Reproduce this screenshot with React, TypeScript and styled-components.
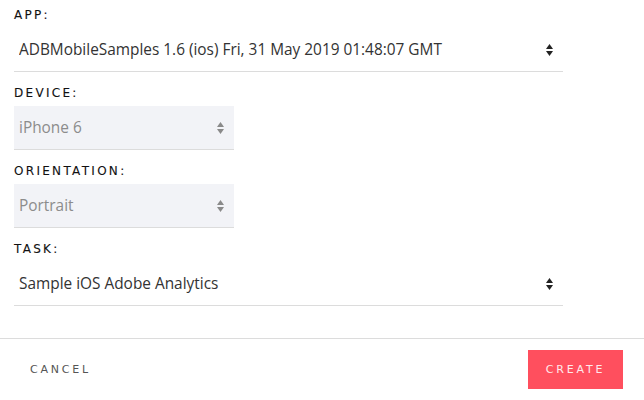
import React from "react";
import styled, { createGlobalStyle } from "styled-components";

const GlobalStyle = createGlobalStyle`
  html, body {
    margin: 0;
    padding: 0;
    background: #fff;
  }
  body {
    font-family: "Open Sans", "Noto Sans", sans-serif;
    color: #333;
  }
`;

interface IFieldProps {
  label: string;
  value: string;
  wide?: boolean;
  disabled?: boolean;
}

const Arrows: React.FC<{ muted?: boolean }> = ({ muted }) => (
  <ArrowIcon width="7" height="12" viewBox="0 0 7 12" $muted={muted}>
    <path d="M3.5 0 L7 5 L0 5 Z" />
    <path d="M0 7 L7 7 L3.5 12 Z" />
  </ArrowIcon>
);

const Field: React.FC<IFieldProps> = ({ label, value, wide, disabled }) => (
  <FieldBox>
    <Label>{label}</Label>
    <SelectWrap $wide={wide}>
      <Select $disabled={disabled} disabled={disabled} defaultValue={value}>
        <option value={value}>{value}</option>
      </Select>
      <Arrows muted={disabled} />
    </SelectWrap>
  </FieldBox>
);

const App: React.FC = () => {
  return (
    <>
      <GlobalStyle />
      <Container>
        <Form>
          <Field
            label="App:"
            value="ADBMobileSamples 1.6 (ios) Fri, 31 May 2019 01:48:07 GMT"
            wide
          />
          <Field label="Device:" value="iPhone 6" disabled />
          <Field label="Orientation:" value="Portrait" disabled />
          <Field label="Task:" value="Sample iOS Adobe Analytics" wide />
        </Form>
        <Footer>
          <CancelButton>Cancel</CancelButton>
          <CreateButton>Create</CreateButton>
        </Footer>
      </Container>
    </>
  );
};
export default App;

const Container = styled.div`
  width: 644px;
  height: 400px;
  display: flex;
  flex-direction: column;
`;

const Form = styled.div`
  display: flex;
  flex-direction: column;
  padding: 0 14px;
`;

const FieldBox = styled.div`
  display: flex;
  flex-direction: column;
  &:first-child > label {
    margin-top: 8px;
  }
`;

const Label = styled.label`
  display: block;
  margin: 14px 0 6px;
  height: 14px;
  line-height: 14px;
  font-family: "DejaVu Sans", sans-serif;
  font-size: 12px;
  letter-spacing: 2.3px;
  text-transform: uppercase;
  color: #111;
  -webkit-text-stroke: 0.1px #111;
`;

const SelectWrap = styled.div<{ $wide?: boolean }>`
  position: relative;
  width: ${(p) => (p.$wide ? "549px" : "220px")};
  height: 44px;
`;

const Select = styled.select<{ $disabled?: boolean }>`
  appearance: none;
  -webkit-appearance: none;
  width: 100%;
  height: 44px;
  margin: 0;
  padding: 0 30px 0 5px;
  border: none;
  border-bottom: 1px solid #dcdcdc;
  border-radius: 0;
  outline: none;
  font-family: "Open Sans", "Noto Sans", sans-serif;
  font-size: 15.4px;
  opacity: 1;
  background: ${(p) => (p.$disabled ? "#f2f3f7" : "#fff")};
  color: ${(p) => (p.$disabled ? "#8c8c8c" : "#333")};
`;

const ArrowIcon = styled.svg<{ $muted?: boolean }>`
  position: absolute;
  right: 10px;
  top: 50%;
  margin-top: -6px;
  pointer-events: none;
  fill: ${(p) => (p.$muted ? "#8a8a8a" : "#222")};
`;

const Footer = styled.div`
  margin-top: 32px;
  border-top: 1px solid #dcdcdc;
  display: flex;
  align-items: center;
  justify-content: space-between;
  padding: 11px 21px 0 14px;
`;

const BaseButton = styled.button`
  height: 39px;
  border: none;
  font-family: "DejaVu Sans", sans-serif;
  font-size: 11px;
  letter-spacing: 2.8px;
  text-transform: uppercase;
  cursor: pointer;
`;

const CancelButton = styled(BaseButton)`
  background: transparent;
  color: #555;
  padding: 0 16px;
`;

const CreateButton = styled(BaseButton)`
  width: 95px;
  background: #ff4f5e;
  color: #ffe9ec;
  padding: 0;
`;
